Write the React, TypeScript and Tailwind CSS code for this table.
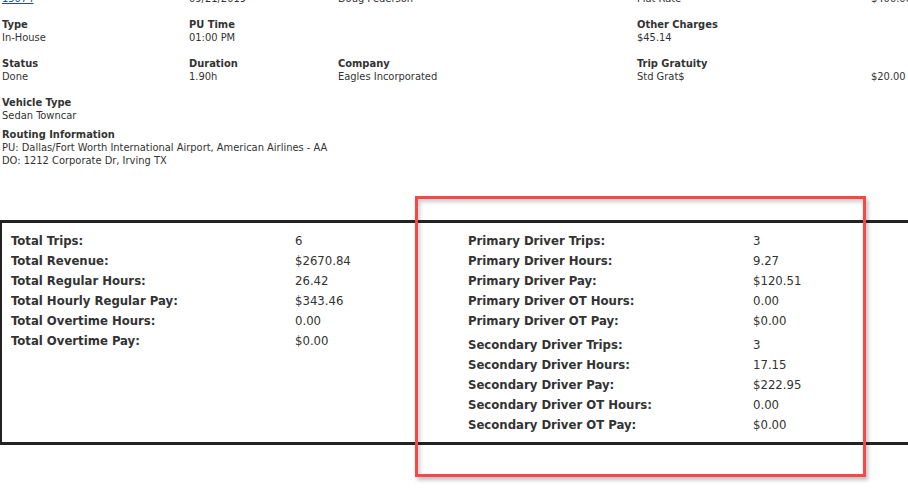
import React from "react";

const font = { fontFamily: '"DejaVu Sans Condensed", "DejaVu Sans", "Liberation Sans", sans-serif' };

function Field({ label, value, link }: { label?: string; value?: string; link?: boolean }) {
  return (
    <div className="flex flex-col leading-[13px]">
      <span className="font-bold text-[#333] h-[13px]">{label}</span>
      <span className={link ? "text-[#1d4f91] underline" : "text-[#333]"}>{value}</span>
    </div>
  );
}

const totals = [
  ["Total Trips:", "6"],
  ["Total Revenue:", "$2670.84"],
  ["Total Regular Hours:", "26.42"],
  ["Total Hourly Regular Pay:", "$343.46"],
  ["Total Overtime Hours:", "0.00"],
  ["Total Overtime Pay:", "$0.00"],
];

const primary = [
  ["Primary Driver Trips:", "3"],
  ["Primary Driver Hours:", "9.27"],
  ["Primary Driver Pay:", "$120.51"],
  ["Primary Driver OT Hours:", "0.00"],
  ["Primary Driver OT Pay:", "$0.00"],
];

const secondary = [
  ["Secondary Driver Trips:", "3"],
  ["Secondary Driver Hours:", "17.15"],
  ["Secondary Driver Pay:", "$222.95"],
  ["Secondary Driver OT Hours:", "0.00"],
  ["Secondary Driver OT Pay:", "$0.00"],
];

function StatRows({ rows, valueCol }: { rows: string[][]; valueCol: string }) {
  return (
    <div className="flex flex-col">
      {rows.map(([k, v]) => (
        <div key={k} className="flex h-[20px] items-center">
          <span className={`font-bold text-[#333] ${valueCol}`}>{k}</span>
          <span className="text-[#333]">{v}</span>
        </div>
      ))}
    </div>
  );
}

export default function App() {
  return (
    <div className="relative w-[908px] h-[493px] overflow-hidden bg-white" style={font}>
      {/* trip details */}
      <div className="text-[11px] pl-[2px] flex flex-col -mt-[21px]">
        <div className="grid grid-cols-[187px_149px_299px_234px_1fr]">
          <Field label="Trip #" value="15074" link />
          <Field label="PU Date" value="09/21/2019" />
          <Field label="Driver" value="Doug Pederson" />
          <Field label="Rate Type" value="Flat Rate" />
          <Field label="" value="$400.00" />
        </div>
        <div className="grid grid-cols-[187px_149px_299px_234px_1fr] mt-[13px]">
          <Field label="Type" value="In-House" />
          <Field label="PU Time" value="01:00 PM" />
          <div />
          <Field label="Other Charges" value="$45.14" />
          <div />
        </div>
        <div className="grid grid-cols-[187px_149px_299px_234px_1fr] mt-[13px]">
          <Field label="Status" value="Done" />
          <Field label="Duration" value="1.90h" />
          <Field label="Company" value="Eagles Incorporated" />
          <Field label="Trip Gratuity" value="Std Grat$" />
          <Field label="" value="$20.00" />
        </div>
        <div className="mt-[13px]">
          <Field label="Vehicle Type" value="Sedan Towncar" />
        </div>
        <div className="mt-[6px] flex flex-col leading-[13px] text-[#333]">
          <span className="font-bold">Routing Information</span>
          <span>PU: Dallas/Fort Worth International Airport, American Airlines - AA</span>
          <span>DO: 1212 Corporate Dr, Irving TX</span>
        </div>
      </div>

      {/* summary */}
      <div className="mt-[53px] w-[920px] border-t-[3px] border-b-[3px] border-l-[2px] border-[#222] flex text-[13px] pt-[8px] pb-[7px]">
        <div className="w-[455px] pl-[9px]">
          <StatRows rows={totals} valueCol="w-[284px]" />
        </div>
        <div className="flex flex-col gap-[4px] pl-[11px]">
          <StatRows rows={primary} valueCol="w-[285px]" />
          <StatRows rows={secondary} valueCol="w-[285px]" />
        </div>
      </div>

      {/* highlight annotation */}
      <div className="absolute left-[415px] top-[196px] w-[451px] h-[281px] border-[3px] border-[#f54848] shadow-[2px_3px_4px_rgba(0,0,0,0.25),inset_2px_3px_4px_rgba(0,0,0,0.2)]" />
    </div>
  );
}
